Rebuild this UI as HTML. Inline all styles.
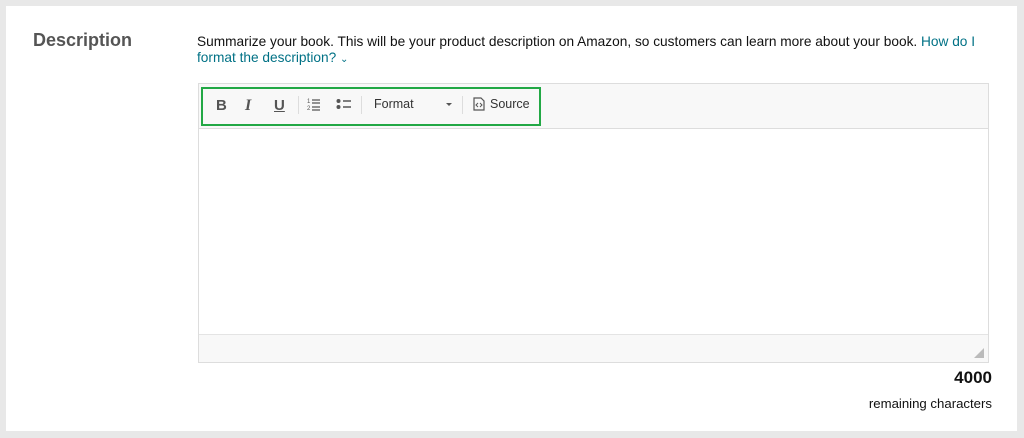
<!DOCTYPE html>
<html><head><meta charset="utf-8"><style>
body{margin:0;width:1024px;height:438px;background:#e8e8e8;font-family:"Liberation Sans",Arial,sans-serif;position:relative;overflow:hidden}
.card{position:absolute;left:6px;top:6px;width:1011px;height:425px;background:#fff}
.h{position:absolute;left:33px;top:30px;font-size:18px;font-weight:bold;color:#555}
.p{position:absolute;left:197px;top:34px;width:800px;font-size:13.7px;line-height:16px;color:#111}
.p a{color:#007185;text-decoration:none}
.ed{position:absolute;left:198px;top:83px;width:789px;height:278px;border:1px solid #ddd;background:#fff}
.tb{position:absolute;left:0;top:0;right:0;height:44px;background:#f8f8f8;border-bottom:1px solid #ddd}
.bb{position:absolute;left:0;bottom:0;right:0;height:27px;background:#f8f8f8;border-top:1px solid #e4e4e4}
.grn{position:absolute;left:201px;top:87px;width:336px;height:35px;border:2.5px solid #22a845}
.ic{position:absolute;top:97px;font-size:15px;color:#555;font-weight:bold}
.sep{position:absolute;top:96px;width:1px;height:18px;background:#ddd}
.t{position:absolute;font-size:12.5px;color:#333}
</style></head><body>
<div class="card"></div>
<div class="h">Description</div>
<div class="p">Summarize your book. This will be your product description on Amazon, so customers can learn more about your book. <a>How do I format the description? <span style="font-size:10px">&#8964;</span></a></div>
<div class="ed"><div class="tb"></div><div class="bb"></div>
<svg style="position:absolute;right:4px;bottom:4px" width="10" height="10"><polygon points="10,0 10,10 0,10" fill="#bbb"/></svg></div>
<div class="grn"></div>
<div class="ic" style="left:216px">B</div>
<div class="ic" style="left:245px;font-style:italic;font-family:'Liberation Serif',serif;font-size:16px">I</div>
<div class="ic" style="left:274px;text-decoration:underline">U</div>
<div class="sep" style="left:298px"></div>
<svg style="position:absolute;left:307px;top:97px" width="14" height="14"><text x="0" y="6" font-size="6" fill="#555">1</text><text x="0" y="13" font-size="6" fill="#555">2</text><path d="M5 3h8M5 6h8M5 10h8M5 13h8" stroke="#555" stroke-width="1.3"/></svg>
<svg style="position:absolute;left:336px;top:98px" width="16" height="12"><circle cx="2.5" cy="3" r="2" fill="#555"/><circle cx="2.5" cy="9" r="2" fill="#555"/><path d="M7 3h8M7 9h8" stroke="#555" stroke-width="1.5"/></svg>
<div class="sep" style="left:361px"></div>
<div class="t" style="left:374px;top:97px">Format</div>
<svg style="position:absolute;left:446px;top:103px" width="6" height="4"><polygon points="0,0 6,0 3,3" fill="#555"/></svg>
<div class="sep" style="left:462px"></div>
<svg style="position:absolute;left:473px;top:97px" width="12" height="14"><path d="M1 1h7l3 3v9H1z" fill="none" stroke="#555" stroke-width="1.2"/><path d="M5 6l-2 2 2 2M7 6l2 2-2 2" fill="none" stroke="#555" stroke-width="1"/></svg>
<div class="t" style="left:490px;top:97px">Source</div>
<div style="position:absolute;right:32px;top:368px;font-size:17px;font-weight:bold;color:#111">4000</div>
<div style="position:absolute;right:32px;top:396px;font-size:13.2px;color:#111">remaining characters</div>
</body></html>
